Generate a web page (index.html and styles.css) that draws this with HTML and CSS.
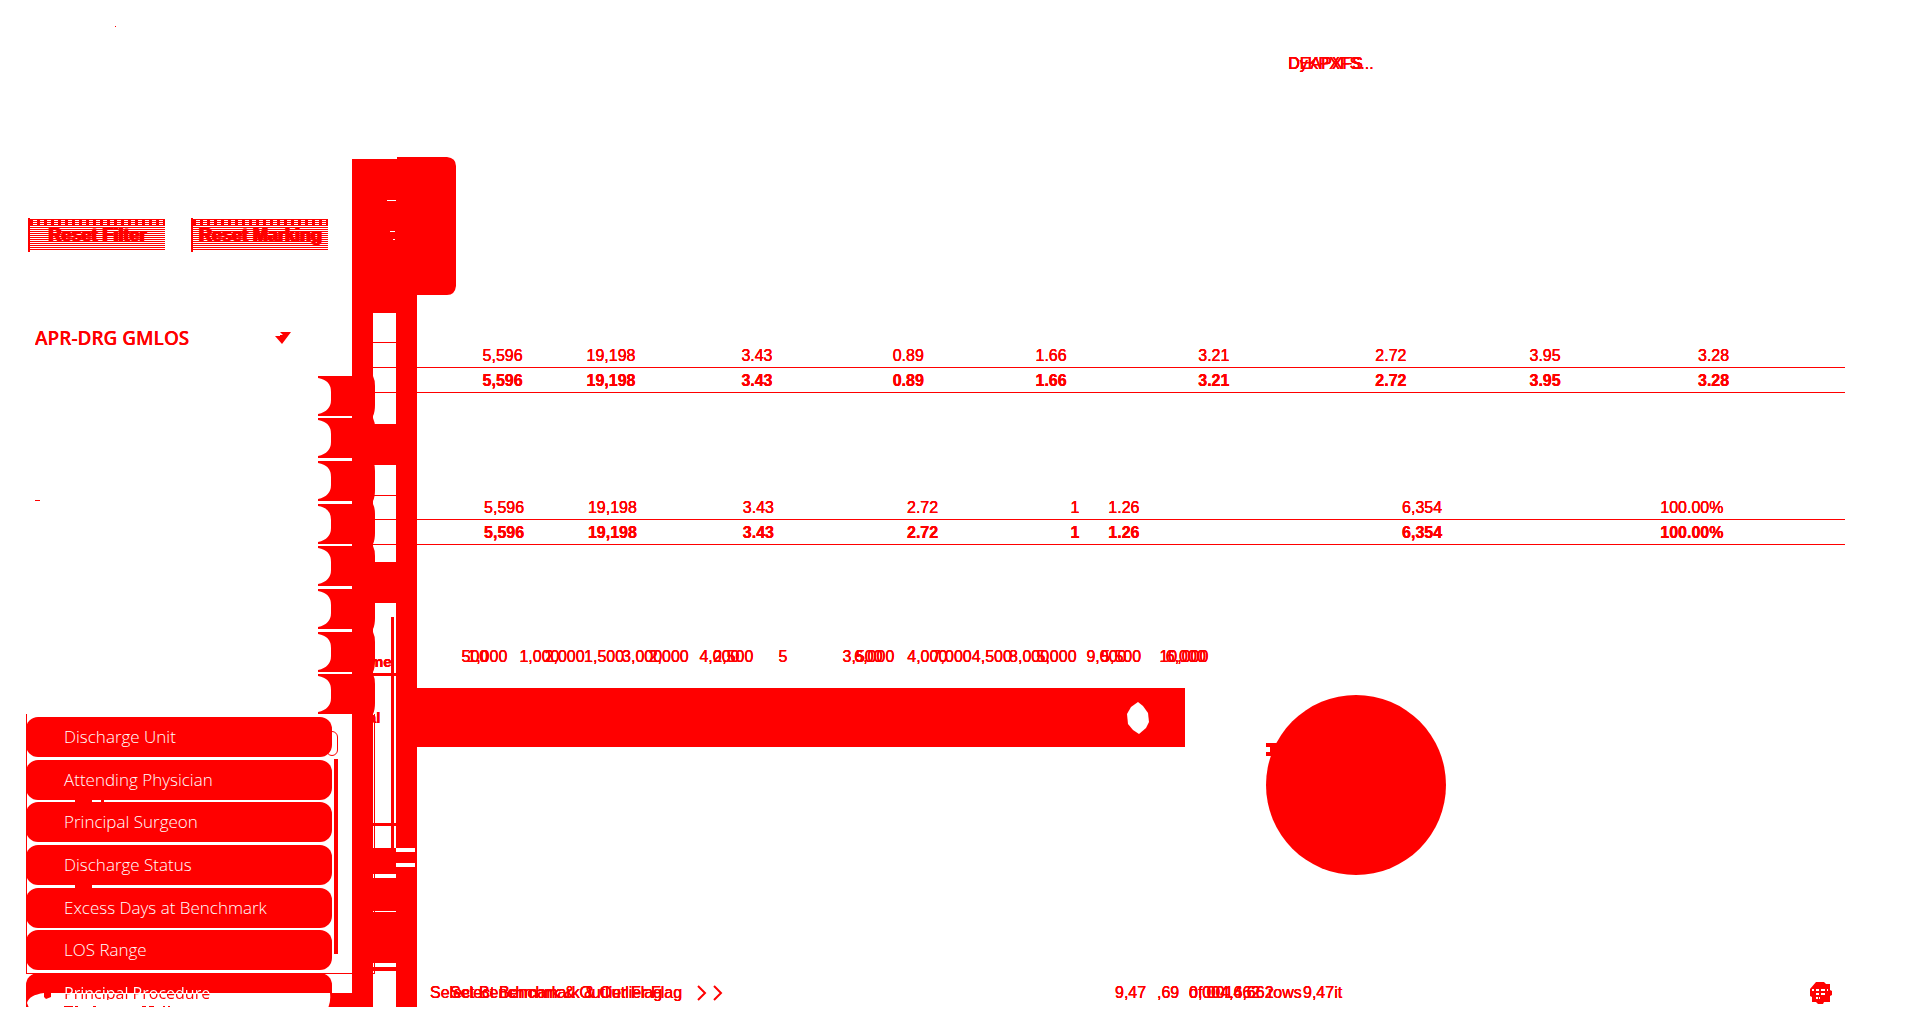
FILE: index.html
```html
<!DOCTYPE html>
<html lang="en">
<head>
<meta charset="utf-8">
<title>Length of stay</title>
<link rel="stylesheet" href="styles.css">
</head>
<body>
<header class="top"><i class="dot"></i>
  <h1 class="stack title"><span>DEAPXFS</span><span>DyKPXFS...</span></h1>
</header>
<div class="page">
  <aside class="side">
    <div class="buttons">
      <button type="button">Reset Filter</button>
      <button type="button">Reset Marking</button>
    </div>
    <div class="picker">
      <select class="select" aria-label="Benchmark"><option>APR-DRG GMLOS</option></select>
      <svg class="arrow" width="16" height="12" viewBox="0 0 16 12"><path d="M0 4H5V3H8L5 0H16L7 12Z"/></svg>
    </div>
    <i class="dash"></i>
    <div class="filters">
      <i class="handle"></i><i class="scroll"></i>
      <svg class="ticks" width="30" height="90" viewBox="0 0 30 90"><path d="M0 0H17V3H0ZM26 0H29V3H26ZM0 85H17V89H0Z"/></svg>
      <div class="pills">
        <button type="button">Discharge Unit</button>
        <button type="button">Attending Physician</button>
        <button type="button">Principal Surgeon</button>
        <button type="button">Discharge Status</button>
        <button type="button">Excess Days at Benchmark</button>
        <button type="button">LOS Range</button>
        <button type="button" class="cut"><span>Principal Procedure</span></button>
      </div>
      <svg class="tail" width="350" height="15" viewBox="0 0 350 15"><path d="M0 0H18Q3 2 1 10L3 15H0ZM304 0H347V15H302Q305 9 304 0ZM18 0H25V4L20 6L18 4Z"/><path d="M38 13h9v1h-9zm11 0h3v1h-3zm18 0h3v1h-3zm49 0h4v1h-4zm7 0h5v1h-5zm14 0h2v1h-2zm5 0h2v1h-2z"/></svg>
    </div>
  </aside>
  <svg class="rail" width="138" height="853" viewBox="318 157 138 853">
    <defs><path id="hook" d="M318 0H373Q375 4 375 10V29Q375 36 373 40H318V38Q331 35 331 24V16Q331 4 318 2Z"/></defs>
    <path fill-rule="evenodd" d="M352 159H397V157H447Q456 158 456 166V286Q455 295 447 295H417V1009H373V1007H352ZM373 313V424H396V313ZM373 465V562H396V465ZM373 603V848H396V603ZM396 848V852H415V848ZM396 863V867H415V863ZM373 874V878H396V874ZM373 911V912H396V911ZM373 963V967H396V963ZM373 971V1007H396V971ZM387 200V201H396V200ZM390 231V232H395V231ZM393 239V240H395V239Z"/>
    <use href="#hook" y="376"/><use href="#hook" y="418"/><use href="#hook" y="461"/><use href="#hook" y="504"/><use href="#hook" y="546"/><use href="#hook" y="589"/><use href="#hook" y="632"/><use href="#hook" y="674"/>
    <path d="M373 342h23v1h-23zm0 25h23v1h-23zm0 25h23v1h-23zm0 103h23v1h-23zm0 24h23v1h-23zm0 25h23v1h-23zM391 617h3v231h-3zM373 673h23v3h-23zm0 150h23v3h-23zM374 714h1v260h-1z"/>
    <text x="370" y="667">me</text><text x="368" y="723">al</text>
  </svg>
  <main class="main">
    <table class="data first">
      <tbody>
        <tr><td>5,596</td><td>19,198</td><td>3.43</td><td>0.89</td><td>1.66</td><td>3.21</td><td>2.72</td><td>3.95</td><td>3.28</td><td></td></tr>
        <tr class="total"><td>5,596</td><td>19,198</td><td>3.43</td><td>0.89</td><td>1.66</td><td>3.21</td><td>2.72</td><td>3.95</td><td>3.28</td><td></td></tr>
      </tbody>
    </table>
    <table class="data second">
      <tbody>
        <tr><td>5,596</td><td>19,198</td><td>3.43</td><td>2.72</td><td>1</td><td>1.26</td><td>6,354</td><td>100.00%</td><td></td></tr>
        <tr class="total"><td>5,596</td><td>19,198</td><td>3.43</td><td>2.72</td><td>1</td><td>1.26</td><td>6,354</td><td>100.00%</td><td></td></tr>
      </tbody>
    </table>
    <div class="axes stack">
      <div class="axis coarse"><span>1,000</span><span>2,000</span><span>3,000</span><span>4,000</span><span class="lead">5</span><span>6,000</span><span>7,000</span><span>8,000</span><span>9,000</span><span>10,000</span></div>
      <div class="axis fine"><span>500</span><span>1,000</span><span>1,500</span><span>2,000</span><span>2,500</span><span></span><span>3,500</span><span>4,000</span><span>4,500</span><span>5,000</span><span>5,500</span><span>6,000</span></div>
    </div>
    <div class="charts">
      <div class="bar"><svg width="22" height="32" viewBox="0 0 22 32"><path d="M11 0L16 4L21 11L22 20L19 26L12 32L6 28L1 22L0 12L4 5Z"/></svg></div>
      <div class="pie"><svg viewBox="0 0 182 182"><circle cx="91" cy="91" r="90"/><path d="M1 49H14V62H1V58H5V53H1Z"/></svg></div>
    </div>
    <footer class="status">
      <div class="stack labels"><span>Select Benchmark &amp; Outlier Flag</span><span class="inset">Select Benchmark &amp; Outlier Flag</span></div>
      <svg class="chev" width="26" height="16" viewBox="0 0 26 16"><path d="M1 1L8 8L1 15M17 1L24 8L17 15"/></svg>
      <div class="counts"><span>9,47</span><span>,69</span><span class="stack"><span>0,004,662</span><span>of 0014,662</span></span><span>rows</span><span>9,47it</span></div>
      <svg class="globe" width="22" height="22" viewBox="0 0 22 22"><path fill-rule="evenodd" d="M6 0H14L16 2H20V8L22 9V13L20 14V20H14L13 22H8L6 20H2V15L0 14V7ZM2 7V9H4V7ZM6 7V9H9V7ZM11 7V9H15V7ZM17 7V9H18V7ZM6 11V13H9V11ZM11 11V13H15V11ZM6 15V17H8V15ZM9 15V17H10V15Z"/></svg>
    </footer>
  </main>
</div>
</body>
</html>
```
FILE: styles.css
```css
* { box-sizing: border-box; }
body {
  margin: 0;
  background: #fff;
  color: #f00;
  font: 16px/20px "Liberation Sans", Arial, sans-serif;
  text-shadow: 0 0 #f00, 0 0 #f00;
  overflow-x: hidden;
}
svg { display: block; fill: #f00; }
i { display: block; }
button, select { font: inherit; color: inherit; border: 0; border-radius: 0; padding: 0; margin: 0; background: none; }
.stack { display: grid; justify-items: start; }
.stack > * { grid-area: 1 / 1; }

.top { height: 159px; padding-top: 26px; }
.dot { width: 1px; height: 1px; margin-left: 115px; background: #f00; }
.title { margin: 27px 0 0 67.1%; font-size: 16px; font-weight: 400; }

.page { position: relative; display: grid; grid-template-columns: 417px 1fr; }
.side { padding: 59px 0 0 28px; }
.buttons { display: flex; gap: 26px; }
.buttons button {
  width: 137px;
  height: 34px;
  border-left: 2px solid #f00;
  font-size: 18px;
  font-weight: 700;
  text-shadow: 1px 0 #f00, -1px 0 #f00;
  white-space: nowrap;
  background:
    repeating-linear-gradient(90deg, #f00 0 3px, transparent 3px 7px) 0 2px / 100% 5px no-repeat,
    repeating-linear-gradient(#fff 0 1px, #f00 1px 2px) 0 0 / 100% 32px no-repeat;
}
.picker { display: flex; align-items: center; margin-top: 74px; padding-left: 7px; }
.select { width: 240px; height: 24px; appearance: none; font: 600 19px/24px "Open Sans", sans-serif; text-shadow: 0 0 #f00; }
.arrow { flex: none; }
.dash { width: 5px; height: 1px; margin: 150px 0 0 7px; background: #f00; }

.filters { position: relative; margin: 213px 0 0 -2px; height: 293px; padding-top: 3px; }
.filters::before { content: ""; position: absolute; inset: 0 42px 33px 0; border: solid #f00; border-width: 0 0 1px 1px; }
.pills { position: relative; display: flex; flex-direction: column; justify-content: space-between; width: 306px; height: 296px; }
.pills button {
  height: 40px;
  padding-left: 38px;
  border-radius: 12px;
  background: #f00;
  color: #fff;
  font: 300 17px/38px "Open Sans", sans-serif;
  text-align: left;
  text-shadow: none;
}
.pills .cut { background: linear-gradient(#f00 20px, transparent 20px); }
.cut span {
  display: block;
  font-weight: 400;
  font-size: 16px;
  color: transparent;
  background: linear-gradient(#fff 20px, #f00 20px 26px, transparent 26px);
  -webkit-background-clip: text;
  background-clip: text;
}
.handle { position: absolute; left: 300px; top: 17px; width: 12px; height: 25px; border: 1px solid #f00; border-radius: 6px; }
.scroll { position: absolute; left: 308px; top: 45px; width: 4px; height: 195px; background: #f00; }
.ticks { position: absolute; left: 49px; top: 86px; }
.tail { margin-top: -20px; position: relative; }
.rail { position: absolute; left: 318px; top: -2px; font: 700 15px "Liberation Sans", sans-serif; }

.main { padding-top: 184px; min-width: 0; }
.data { width: 95%; table-layout: fixed; border-collapse: separate; border-spacing: 0; }
.data td { height: 25px; padding: 1px 0 0; border-bottom: 1px solid #f00; text-align: right; line-height: 23px; }
.total { font-weight: 700; }
.second { margin-top: 102px; }
.first td:nth-child(1) { width: 7.4%; }
.first td:nth-child(2) { width: 7.9%; }
.first td:nth-child(3) { width: 9.6%; }
.first td:nth-child(4) { width: 10.6%; }
.first td:nth-child(5) { width: 10%; }
.first td:nth-child(6) { width: 11.4%; }
.first td:nth-child(7) { width: 12.4%; }
.first td:nth-child(8) { width: 10.8%; }
.first td:nth-child(9) { width: 11.8%; }
.second td:nth-child(1) { width: 7.5%; }
.second td:nth-child(2) { width: 7.9%; }
.second td:nth-child(3) { width: 9.6%; }
.second td:nth-child(4) { width: 11.5%; }
.second td:nth-child(5) { width: 9.9%; }
.second td:nth-child(6) { width: 4.2%; }
.second td:nth-child(7) { width: 21.2%; }
.second td:nth-child(8) { width: 19.7%; }

.axes { margin-top: 102px; }
.axis { display: grid; grid-auto-flow: column; grid-auto-columns: 1fr; text-align: center; }
.coarse { width: 51.5%; margin-left: 2.1%; }
.fine { width: 51.6%; margin-left: 1.7%; }
.lead { padding-right: 28px; }
.charts { display: flex; align-items: flex-start; height: 295px; padding-top: 21px; margin-bottom: 21px; }
.bar { display: flex; align-items: center; justify-content: flex-end; width: 51.1%; height: 59px; padding-right: 36px; background: #f00; }
.bar svg { fill: #fff; }
.pie { width: 182px; margin: 6px 0 0 80px; }

.status { display: flex; align-items: center; height: 20px; padding-left: 13px; white-space: nowrap; }
.labels { width: 267px; flex: none; }
.inset { padding-left: 20px; }
.chev { flex: none; fill: none; stroke: #f00; stroke-width: 2; }
.counts { display: grid; grid-template-columns: 42px 32px 79px 35px 1fr; width: 695px; margin-left: 392px; }
```
